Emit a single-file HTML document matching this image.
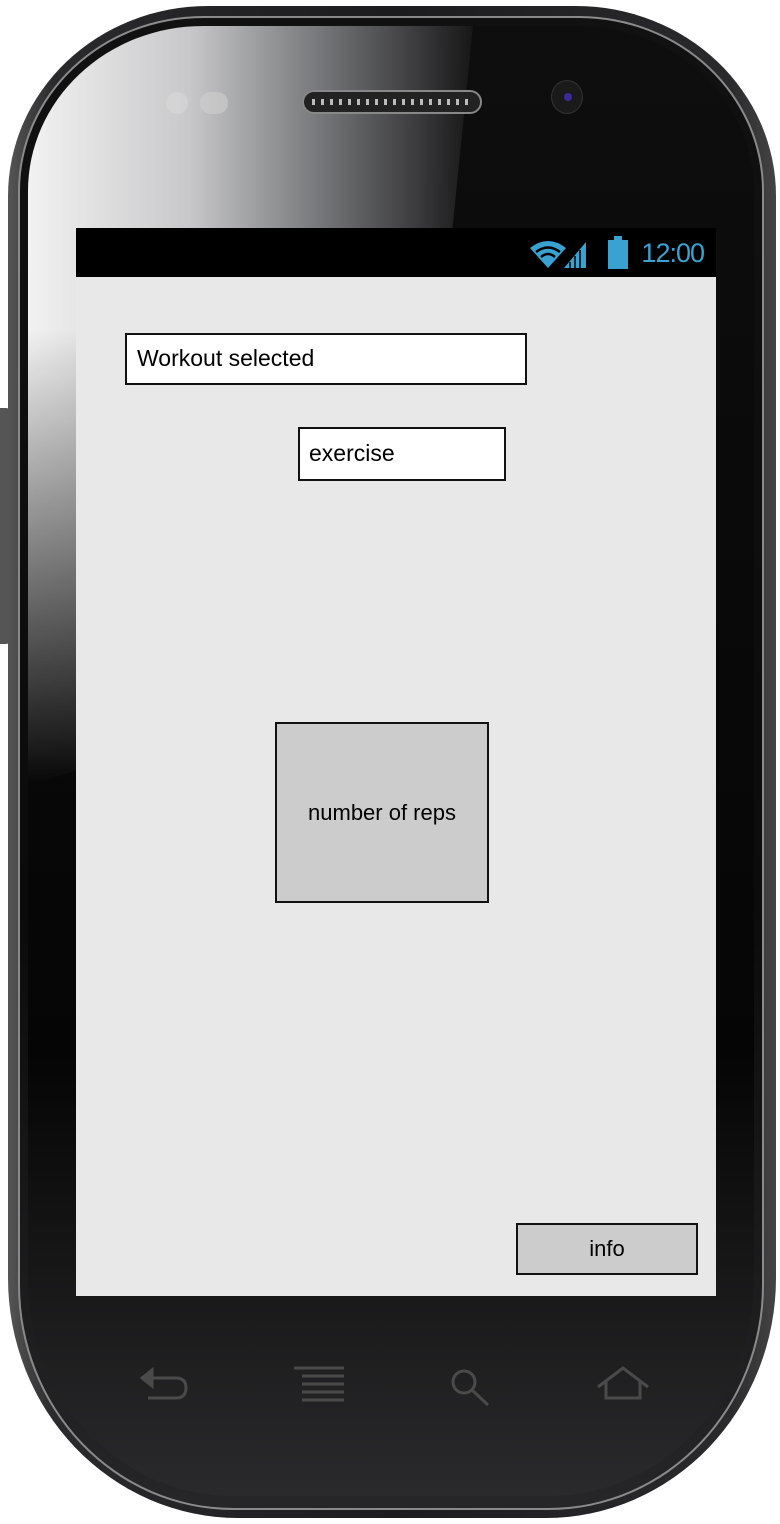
<!DOCTYPE html>
<html><head><meta charset="utf-8"><style>
*{margin:0;padding:0;box-sizing:border-box}
body{width:780px;height:1524px;background:#fff;position:relative;overflow:hidden;font-family:"Liberation Sans",sans-serif}
.outer{position:absolute;left:8px;top:6px;width:768px;height:1512px;border-radius:200px 200px 230px 230px/190px 190px 240px 240px;background:linear-gradient(90deg,#555 0%,#2a2a2c 6%,#1c1c1e 50%,#2a2a2c 94%,#444 100%)}
.rim{position:absolute;left:18px;top:16px;width:746px;height:1494px;border-radius:185px 185px 215px 215px/175px 175px 225px 225px;border:2px solid #8a8a8a;background:linear-gradient(180deg,#111 0%,#0b0b0b 60%,#262628 100%)}
.face{position:absolute;left:28px;top:26px;width:726px;height:1470px;border-radius:175px 175px 205px 205px/165px 165px 215px 215px;overflow:hidden;background:linear-gradient(180deg,#0e0e0e 0%,#050505 70%,#2a2a2c 100%)}
.glare{position:absolute;left:0;top:0;width:460px;height:760px;background:linear-gradient(90deg,#f2f2f2 0%,#c8c8ca 35%,#7a7b7e 62%,#3a3a3c 85%,rgba(20,20,20,0) 100%);clip-path:polygon(0 0,445px 0,380px 640px,0 760px);-webkit-mask-image:linear-gradient(180deg,#000 0%,#000 40%,rgba(0,0,0,.5) 70%,transparent 100%);mask-image:linear-gradient(180deg,#000 0%,#000 40%,rgba(0,0,0,.5) 70%,transparent 100%)}
.side{position:absolute;left:0;top:408px;width:10px;height:236px;background:#555;border-radius:0 4px 4px 0}
.screen{position:absolute;left:76px;top:228px;width:640px;height:1068px;background:#e8e8e8}
.status{position:absolute;left:0;top:0;width:640px;height:49px;background:#000}
.time{position:absolute;right:12px;top:10px;color:#3aa2d0;font-size:27px;letter-spacing:-1px}
.box{position:absolute;background:#fff;border:2px solid #111;font-family:"Comic Sans MS","Liberation Sans",sans-serif;font-size:23px;color:#000}
.speaker{position:absolute;left:302px;top:90px;width:180px;height:24px;border-radius:12px;background:#222;border:2px solid #888}
.speaker:after{content:"";position:absolute;left:8px;right:8px;top:7px;height:6px;background:repeating-linear-gradient(90deg,#bbb 0 3px,#222 3px 9px)}
.cam{position:absolute;left:551px;top:80px;width:32px;height:34px;border-radius:50%;background:#1a1a1a;border:1px solid #333}
.cam:after{content:"";position:absolute;left:12px;top:12px;width:8px;height:8px;border-radius:50%;background:#3a2a9a}
</style></head><body>
<div class="outer"></div>
<div class="rim"></div>
<div class="face"><div class="glare"></div></div>
<div class="side"></div>
<div class="speaker"></div>
<div class="cam"></div>
<div style="position:absolute;left:166px;top:92px;width:22px;height:22px;border-radius:50%;background:#d8d8d8;opacity:.6"></div>
<div style="position:absolute;left:200px;top:92px;width:28px;height:22px;border-radius:11px;background:#cfcfcf;opacity:.6"></div>
<div class="screen">
 <div class="status">
  <svg style="position:absolute;left:452px;top:10px" width="72" height="32" viewBox="0 0 72 32">
   <path d="M2 10 Q20 -4 38 10 L20 30 Z" fill="#3aa2d0"/>
   <path d="M8 14 Q20 5 32 14" stroke="#000" stroke-width="2.5" fill="none"/>
   <path d="M13 19 Q20 13 27 19" stroke="#000" stroke-width="2.5" fill="none"/>
   <path d="M36 30 L58 30 L58 4 Z" fill="#3aa2d0"/>
   <path d="M42 30 V24 M47 30 V18 M52 30 V12" stroke="#000" stroke-width="1.5"/>
  </svg>
  <div style="position:absolute;left:532px;top:12px;width:20px;height:29px;background:#3aa2d0"></div>
  <div style="position:absolute;left:538px;top:8px;width:8px;height:5px;background:#3aa2d0"></div>
  <div class="time">12:00</div>
 </div>
 <div class="box" style="left:49px;top:105px;width:402px;height:52px;padding:10px 0 0 10px">Workout selected</div>
 <div class="box" style="left:222px;top:199px;width:208px;height:54px;padding:11px 0 0 9px">exercise</div>
 <div class="box" style="left:199px;top:494px;width:214px;height:181px;background:#ccc;text-align:center;line-height:177px;font-size:22px">number of reps</div>
 <div class="box" style="left:440px;top:995px;width:182px;height:52px;background:#ccc;text-align:center;line-height:48px;font-size:22px">info</div>
</div>
<svg style="position:absolute;left:0;top:1350px" width="780" height="80" viewBox="0 0 780 80" fill="none" stroke="#4a4a4a" stroke-width="3">
 <path d="M148 28 H176 Q186 28 186 38 Q186 48 176 48 H148"/>
 <path d="M142 28 L152 20 L152 36 Z" fill="#4a4a4a"/>
 <path d="M294 18 H344 M302 26 H344 M302 34 H344 M302 42 H344 M302 50 H344"/>
 <circle cx="464" cy="32" r="11"/><path d="M472 40 L488 55"/>
 <path d="M598 37 L623 18 L648 37 M606 32 V48 H640 V32"/>
</svg>
</body></html>
